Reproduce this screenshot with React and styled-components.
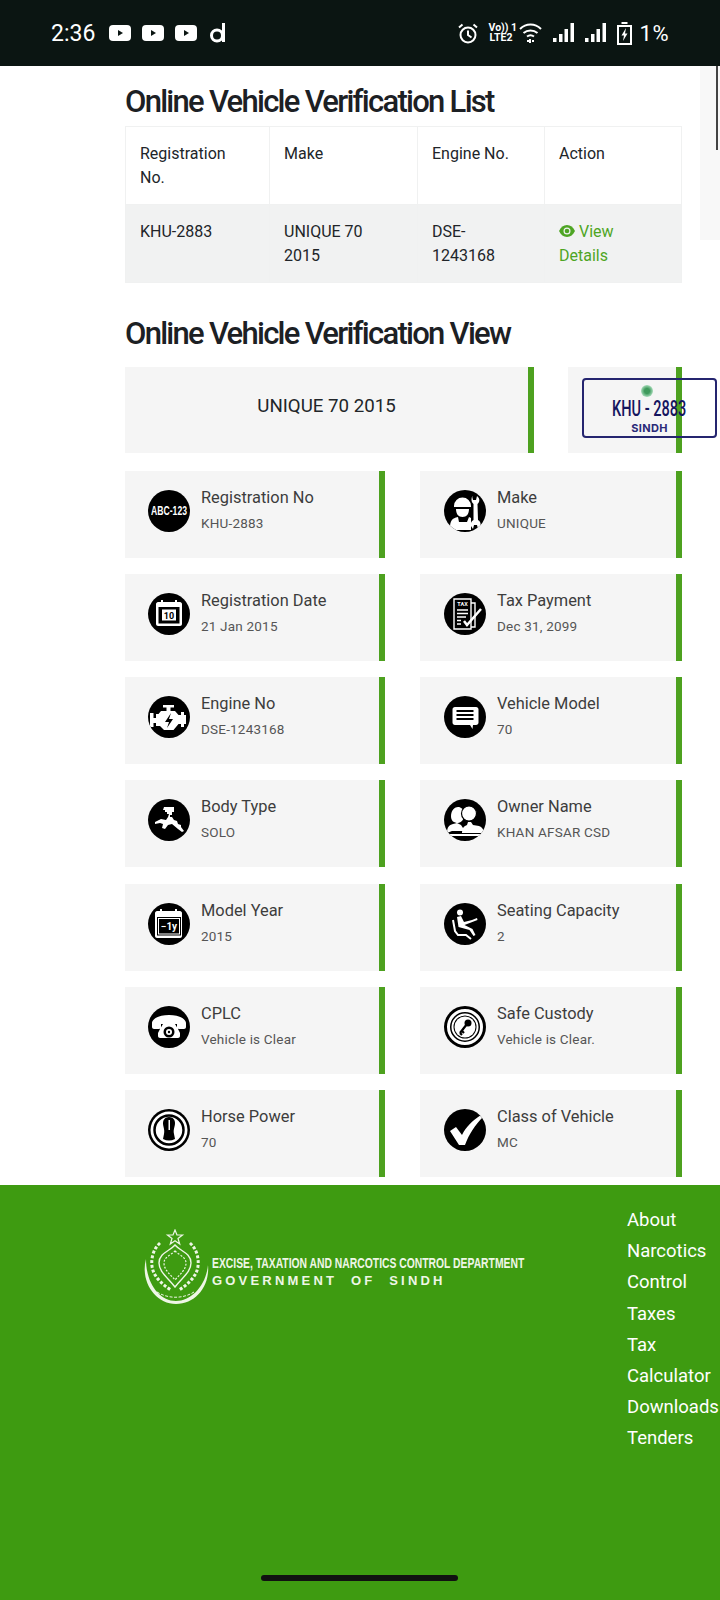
import React from 'react';
import styled, { createGlobalStyle } from 'styled-components';

const Global = createGlobalStyle`
  html, body { margin: 0; padding: 0; background: #fff; }
  body { font-family: Roboto, "Liberation Sans", sans-serif; color: #212529; }
`;

const Page = styled.div`
  position: relative;
  width: 720px;
  height: 1600px;
  overflow: hidden;
  display: flex;
  flex-direction: column;
`;

const StatusBar = styled.div`
  height: 66px;
  flex: none;
  background: #0b1512;
  color: #fff;
  display: flex;
  align-items: center;
  justify-content: space-between;
  padding: 0 51px 0 51px;
`;
const StatusGroup = styled.div`
  display: flex;
  align-items: center;
  gap: ${p => p.$gap || 10}px;
`;
const Time = styled.span`
  font-size: 23px;
  margin-right: 3px;
`;
const Percent = styled.span`
  font-size: 22px;
  margin-left: -3px;
  letter-spacing: .5px;
`;
const NetLabel = styled.span`
  font-size: 10.5px;
  line-height: 10.5px;
  font-weight: 700;
  width: 25px;
  text-align: center;
  white-space: nowrap;
`;

const SidePanel = styled.div`
  position: absolute;
  top: 66px;
  right: 0;
  width: 20px;
  height: 174px;
  background: #f8f8f8;
  &::after {
    content: '';
    position: absolute;
    top: 0;
    right: 2px;
    width: 2px;
    height: 84px;
    background: #444;
  }
`;

const Content = styled.main`
  margin-left: 125px;
  width: 557px;
  flex: none;
`;
const Heading = styled.h2`
  font-size: 31px;
  line-height: 38px;
  font-weight: 500;
  letter-spacing: -1.72px;
  color: #1c2024;
  margin: ${p => p.$top}px 0 ${p => p.$bottom}px;
`;
const Table = styled.table`
  width: 556px;
  table-layout: fixed;
  border-collapse: collapse;
  font-size: 16px;
  line-height: 24px;
  margin: 0;
`;
const Cell = styled.td`
  box-sizing: border-box;
  border: 1px solid #f0f1f1;
  padding: 15px 20px 14px 14px;
  vertical-align: top;
  font-weight: 400;
  text-align: left;
  background: ${p => (p.$striped ? '#f1f2f2' : '#fff')};
  width: ${p => p.$w}px;
`;
const HeadCell = styled(Cell).attrs({ as: 'th' })`
  font-weight: 400;
`;
const Link = styled.a`
  color: #4ea524;
`;

const TopRow = styled.div`
  display: grid;
  grid-template-columns: 409px 114px;
  column-gap: 34px;
`;
const Banner = styled.div`
  position: relative;
  height: 86px;
  background: #f5f5f5;
  border-right: 6px solid #4da11f;
  display: flex;
  align-items: center;
  justify-content: center;
  font-size: 18.7px;
  padding-bottom: 9px;
  box-sizing: border-box;
`;
const Plate = styled.div`
  position: absolute;
  left: 14px;
  top: 11px;
  width: 135px;
  height: 60px;
  box-sizing: border-box;
  border: 2px solid #25256f;
  border-radius: 4px;
  display: flex;
  flex-direction: column;
  align-items: center;
  color: #15155f;
`;
const PlateDot = styled.span`
  width: 12px;
  height: 12px;
  margin-top: 5px;
  border-radius: 50%;
  background: radial-gradient(#3f9a5c 30%, #a5dab8 70%);
  margin-right: 6px;
  flex: none;
`;
const PlateNo = styled.span`
  font-size: 22px;
  line-height: 23px;
  font-weight: 500;
  transform: scaleX(.66);
  white-space: nowrap;
`;
const PlateState = styled.span`
  font-size: 11px;
  line-height: 12px;
  font-weight: 700;
  font-family: Inter, Roboto, sans-serif;
  color: #2a2a78;
  letter-spacing: .3px;
  margin-top: 2px;
`;

const Grid = styled.div`
  display: grid;
  grid-template-columns: 260px 262px;
  column-gap: 35px;
  row-gap: 16.3px;
  margin-top: 17.5px;
`;
const Card = styled.div`
  height: 87px;
  box-sizing: border-box;
  background: #f5f5f5;
  border-right: 6px solid #4da11f;
  display: flex;
  padding: 19px 0 0 23px;
  gap: 11px;
  &:nth-child(even) { padding-left: 24px; }
`;
const Circle = styled.div`
  width: 42px;
  height: 42px;
  flex: none;
  border-radius: 50%;
  background: #000;
  color: #fff;
  display: flex;
  align-items: center;
  justify-content: center;
  overflow: hidden;
`;
const CircleText = styled.span`
  font-family: "Liberation Sans", sans-serif;
  font-weight: 700;
  font-size: 12px;
  white-space: nowrap;
  transform: scaleX(.72);
`;
const CardTitle = styled.div`
  font-size: 16.4px;
  line-height: 20px;
  color: #3d3d3d;
  margin-bottom: 6px;
  margin-top: -2px;
`;
const CardValue = styled.div`
  font-size: 13.5px;
  line-height: 18px;
  color: #555;
  letter-spacing: .2px;
`;

const Footer = styled.footer`
  margin-top: 7.5px;
  flex: 1;
  background: #3e9b11;
  display: flex;
  position: relative;
`;
const Brand = styled.div`
  margin: 44px 0 0 143px;
  display: flex;
  align-items: flex-start;
  width: 484px;
  flex: none;
  color: #eef6e6;
`;
const BrandText = styled.div`
  margin: 25px 0 0 3px;
  font-family: "Liberation Sans", sans-serif;
  font-weight: 700;
`;
const BrandLine1 = styled.div`
  font-size: 15px;
  line-height: 17px;
  white-space: nowrap;
  transform: scaleX(.69);
  transform-origin: left center;
  width: 312px;
`;
const BrandLine2 = styled.div`
  font-size: 13px;
  line-height: 19px;
  letter-spacing: 3.2px;
  word-spacing: 7px;
  white-space: nowrap;
`;
const Nav = styled.ul`
  list-style: none;
  margin: 0;
  padding: 20.5px 0 0;
  width: 93px;
  flex: none;
  color: #fff;
  font-size: 18.5px;
  line-height: 31.1px;
`;
const HomeBar = styled.div`
  position: absolute;
  left: 261px;
  bottom: 19px;
  width: 197px;
  height: 6px;
  border-radius: 3px;
  background: #111;
`;

const W = { fill: '#fff' };
const K = { fill: '#000' };
const S = { fill: 'none', stroke: '#fff', strokeWidth: 2 };

const icons = {
  make: <>
    <path {...W} d="M10 16a8.500 8.500 0 0 1 17 0v1H10z" />
    <path {...W} d="M12 19h13c0 5-2.400 8-6.500 8S12 24 12 19z" />
    <path {...W} d="M6 38c0-7 2-10 8-11l1 5h8l2-5 2 1v12H8z" />
    <path {...W} d="M28 6l1 4h3l1-4c3 2 3 6 .5 8l.5 16c2 1 3 3 2.500 6l-2.500 3-1-4h-3l-1 4-2-3c-.7-3 .5-5 2.500-6V14c-2.500-2-2.500-6-1-8z" />
  </>,
  calendar: <>
    <path {...W} d="M10 9h3V7h2v2h12V7h2v2h3c1 0 2 1 2 2v20c0 1-1 2-2 2H10c-1 0-2-1-2-2V11c0-1 1-2 2-2z" />
    <rect {...K} x="10.500" y="14" width="21" height="16.500" />
    <rect {...W} x="14" y="16.500" width="14" height="11" />
    <text x="21" y="25.500" textAnchor="middle" fontSize="9" fontWeight="700" fontFamily="Roboto" fill="#000">10</text>
  </>,
  tax: <>
    <path fill="none" stroke="#fff" strokeWidth="1.400" d="M10 6h17v30H10zM27 10h4v24h-4" />
    <text x="18.500" y="13" textAnchor="middle" fontSize="5.500" fontWeight="700" fontFamily="Roboto" fill="#fff">TAX</text>
    <path stroke="#fff" strokeWidth="1.500" d="M13 17h11M13 20.500h11M13 24h9M13 27.500h4M13 31h4" />
    <path fill="none" stroke="#fff" strokeWidth="2.500" d="M20 28l3 4 14-16" />
  </>,
  engine: <>
    <path {...W} d="M15 9h11v2.500h-3.500V15h4.500l3.500 4h2.500v-3h3v3h2v9h-2v3h-3v-3h-2.500l-5 6H16l-4-4H8v-3H5.500v4H2V17h3.500v5H8v-4h2.500l2.500-3h5.500v-3.500H15z" />
    <path {...K} d="M23 17l-6 9h4l-2 6 6-9h-4z" />
  </>,
  message: <>
    <path {...W} d="M11 11h21c1.500 0 2.500 1 2.500 2.500v13c0 1.500-1 2.500-2.500 2.500h-3l-.500 4-2.500-4H11c-1.500 0-2.500-1-2.500-2.500v-13C8.500 12 9.500 11 11 11z" />
    <path stroke="#000" strokeWidth="1.800" d="M12.500 15h17M12.500 19h17M12.500 23h17" />
  </>,
  body: <>
    <path {...W} d="M16 8h10v5h-2v3h-2v2h2l2 3 3 1 1 3 3 1v2l3 4-2 1-4-3-6-5-4 1-3 4-3-1 1-4-3-1-5 1v-2l6-3 5 1 2-3 1-3h-2v-2h-2v-2h-2z" />
  </>,
  owner: <>
    <path {...W} d="M3 34c0-6 2-8 6-9l4-1 4 2 2 3v3H8z" />
    <path {...W} d="M7 17c0-6 4-9 7-9s6 2 6 7c0 4-1 8-6 9-4 0-7-2-7-7z" />
    <circle {...W} stroke="#000" strokeWidth="1.200" cx="25" cy="14.500" r="7.500" />
    <path {...W} d="M24 23h3l2 3 6 1c3 1 5 4 5 7H18c0-3 1-6 3-7l2-1z" />
    <rect {...W} x="6" y="35" width="32" height="2" />
  </>,
  year: <>
    <path {...W} d="M9 8h3V6h2v2h13V6h2v2h3c1 0 2 1 2 2v23c0 1-1 2-2 2H9c-1 0-2-1-2-2V10c0-1 1-2 2-2z" />
    <rect {...K} x="9" y="14" width="24" height="18.500" />
    <rect {...W} x="10" y="15" width="22" height="16.500" />
    <rect {...K} x="11" y="16" width="20" height="14.500" />
    <text x="21" y="27" textAnchor="middle" fontSize="10" fontWeight="700" fontFamily="Roboto" fill="#fff">−1y</text>
  </>,
  seat: <>
    <circle {...W} cx="16" cy="9.500" r="3" />
    <path {...W} d="M13 14l4-1 3 6 8-2 5-2 .5 2-13 5 8 4 3 6-2 1-4-6-11-3z" />
    <path {...S} d="M9 17l2 11 3 4h8l5 4" />
  </>,
  phone: <>
    <path {...W} d="M4 17c0-4 7-8 17-8s17 4 17 8v4c0 1-1 2-2 2h-5c-1 0-2-1-2-2v-3h-2l3 5 2 4v3c0 1-1 2-2 2H12c-1 0-2-1-2-2v-3l2-4 3-5h-2v3c0 1-1 2-2 2H6c-1 0-2-1-2-2z" />
    <circle {...K} cx="21" cy="26" r="5.500" />
    <circle {...W} cx="21" cy="26" r="3" />
    <circle {...K} cx="21" cy="26" r="1.200" />
  </>,
  safe: <>
    <circle fill="none" stroke="#fff" strokeWidth="3" cx="21" cy="21" r="16.500" />
    <circle {...S} cx="21" cy="21" r="12.500" />
    <circle {...W} cx="21" cy="21" r="10.500" />
    <circle {...K} cx="24" cy="17" r="3.500" />
    <path stroke="#000" strokeWidth="2.200" d="M23 18l-7 9M18 25l2 2M16 27l2 2" />
  </>,
  power: <>
    <circle cx="21" cy="21" r="18.500" fill="#fff" />
    <circle cx="21" cy="21" r="14.500" fill="none" stroke="#000" strokeWidth="2.500" />
    <path {...K} d="M21 8c4 0 6 3 6 6 0 4-2 6-1 11l1 5c-4 2-8 2-12 0l1-5c1-5-1-7-1-11 0-3 2-6 6-6z" />
    <rect x="20.500" y="11" width="1.500" height="10" fill="#fff" />
  </>,
  check: <>
    <path {...W} d="M6 22l6-4 6 8C22 18 28 12 37 6l2 2c-8 8-14 17-18 28h-6z" />
  </>,
};

const rows = [
  [{ icon: 'abc', title: 'Registration No', value: 'KHU-2883' }, { icon: 'make', title: 'Make', value: 'UNIQUE' }],
  [{ icon: 'calendar', title: 'Registration Date', value: '21 Jan 2015' }, { icon: 'tax', title: 'Tax Payment', value: 'Dec 31, 2099' }],
  [{ icon: 'engine', title: 'Engine No', value: 'DSE-1243168' }, { icon: 'message', title: 'Vehicle Model', value: '70' }],
  [{ icon: 'body', title: 'Body Type', value: 'SOLO' }, { icon: 'owner', title: 'Owner Name', value: 'KHAN AFSAR CSD' }],
  [{ icon: 'year', title: 'Model Year', value: '2015' }, { icon: 'seat', title: 'Seating Capacity', value: '2' }],
  [{ icon: 'phone', title: 'CPLC', value: 'Vehicle is Clear' }, { icon: 'safe', title: 'Safe Custody', value: 'Vehicle is Clear.' }],
  [{ icon: 'power', title: 'Horse Power', value: '70' }, { icon: 'check', title: 'Class of Vehicle', value: 'MC' }],
];

const YouTube = () => (
  <svg width="22" height="16" viewBox="0 0 22 16">
    <rect width="22" height="16" rx="4" fill="#fff" />
    <path d="M9 5l5 3-5 3z" fill="#0b1512" />
  </svg>
);
const Signal = () => (
  <svg width="21" height="20" viewBox="0 0 21 20" fill="#fff">
    <rect x="0" y="15" width="3.500" height="4" />
    <rect x="6" y="11" width="3.500" height="8" />
    <rect x="11.500" y="6" width="3.500" height="13" />
    <rect x="17.500" y="0" width="3.500" height="19" />
  </svg>
);

const Emblem = () => (
  <svg width="66" height="76" viewBox="0 0 66 76" fill="none" stroke="#eef6e6">
    <path strokeWidth="1.200" d="M32 1l2 5h5.500l-4.500 3.500 1.700 5.500-4.700-3.300-4.700 3.300 1.700-5.500-4.500-3.500H30z" />
    <path fill="#eef6e6" stroke="none" d="M3 30C-3 52 12 75 33 75c19 0 34-17 32-39-2 21-17 36-32 36C16 72 3 54 3 30z" />
    <path strokeWidth="1.400" d="M32 16c5 6 16 8 16 18 0 9-9 15-16 24-7-9-16-15-16-24 0-10 11-12 16-18z" />
    <path strokeWidth="1.200" strokeDasharray="2 1.500" d="M32 22c4 4 11 6 11 12 0 7-6 11-11 17-5-6-11-10-11-17 0-6 7-8 11-12z" />
    <path strokeWidth="3" strokeDasharray="3 1.800" d="M17 14C8 22 7 36 11 44c3 6 9 12 17 17" />
    <path strokeWidth="3" strokeDasharray="3 1.800" d="M47 14c9 8 10 22 6 30-3 6-9 12-17 17" />
    <path strokeWidth="1" strokeDasharray="3 1.500" d="M14 63c11 7 26 7 37 0" />
  </svg>
);

export default function App() {
  return (
    <Page>
      <Global />
      <StatusBar>
        <StatusGroup $gap={11}>
          <Time>2:36</Time>
          <YouTube />
          <YouTube />
          <YouTube />
          <svg width="17" height="20" viewBox="0 0 17 20" fill="none" stroke="#fff" strokeWidth="3" style={{ marginLeft: 1 }}>
            <circle cx="8" cy="12.500" r="5.500" />
            <path d="M14.500 0v19" />
          </svg>
        </StatusGroup>
        <StatusGroup $gap={11}>
          <svg width="20" height="21" viewBox="0 0 20 21" fill="none" stroke="#fff" strokeWidth="2">
            <circle cx="10" cy="12" r="7.500" />
            <path d="M10 7.500V12l3.500 2.500M1 4.500L4.500 1.500M19 4.500L15.500 1.500" />
          </svg>
          <NetLabel>Vo)) 1<br />LTE2</NetLabel>
          <svg width="23" height="21" viewBox="0 0 23 21" fill="none" stroke="#fff" strokeWidth="2" style={{ marginLeft: -6 }}>
            <path d="M1 6c6-6 15-6 21 0M4.500 10c4-3.500 10-3.500 14 0M8 13.500c2-1.500 5-1.500 7 0" />
            <path d="M8 18h2M13 18h2M11 16v4" />
          </svg>
          <Signal />
          <Signal />
          <svg width="15" height="23" viewBox="0 0 15 23" fill="none" stroke="#fff" strokeWidth="2">
            <path d="M1 4h13v18H1zM4.500 1h6" />
            <path fill="#fff" stroke="none" d="M9 6l-4.500 7.500H7L6 19l4.500-7.500H8z" />
          </svg>
          <Percent>1%</Percent>
        </StatusGroup>
      </StatusBar>
      <SidePanel />

      <Content>
        <Heading $top={17} $bottom={5}>Online Vehicle Verification List</Heading>
        <Table>
          <thead>
            <tr>
              <HeadCell $w={144}>Registration No.</HeadCell>
              <HeadCell $w={148}>Make</HeadCell>
              <HeadCell $w={127}>Engine No.</HeadCell>
              <HeadCell $w={137}>Action</HeadCell>
            </tr>
          </thead>
          <tbody>
            <tr>
              <Cell $striped>KHU-2883</Cell>
              <Cell $striped>UNIQUE 70 2015</Cell>
              <Cell $striped>DSE-1243168</Cell>
              <Cell $striped>
                <Link>
                  <svg width="16" height="12" viewBox="0 0 16 12" style={{ marginRight: 4 }}>
                    <path fill="#4ea524" d="M8 0C4.500 0 1.800 2.200 0 6c1.800 3.800 4.500 6 8 6s6.200-2.200 8-6c-1.800-3.800-4.500-6-8-6z" />
                    <circle cx="8" cy="6" r="3.500" fill="#f1f2f2" />
                    <circle cx="8" cy="6" r="2.300" fill="#4ea524" />
                  </svg>
                  View Details
                </Link>
              </Cell>
            </tr>
          </tbody>
        </Table>

        <Heading $top={32} $bottom={14}>Online Vehicle Verification View</Heading>
        <TopRow>
          <Banner>UNIQUE 70 2015</Banner>
          <Banner>
            <Plate>
              <PlateDot />
              <PlateNo>KHU - 2883</PlateNo>
              <PlateState>SINDH</PlateState>
            </Plate>
          </Banner>
        </TopRow>

        <Grid>
          {rows.flat().map(item => (
            <Card key={item.title}>
              <Circle>
                {item.icon === 'abc'
                  ? <CircleText>ABC-123</CircleText>
                  : <svg width="42" height="42" viewBox="0 0 42 42">{icons[item.icon]}</svg>}
              </Circle>
              <div>
                <CardTitle>{item.title}</CardTitle>
                <CardValue>{item.value}</CardValue>
              </div>
            </Card>
          ))}
        </Grid>
      </Content>

      <Footer>
        <Brand>
          <Emblem />
          <BrandText>
            <BrandLine1>EXCISE, TAXATION AND NARCOTICS CONTROL DEPARTMENT</BrandLine1>
            <BrandLine2>GOVERNMENT OF SINDH</BrandLine2>
          </BrandText>
        </Brand>
        <Nav>
          <li>About</li>
          <li>Narcotics Control</li>
          <li>Taxes</li>
          <li>Tax Calculator</li>
          <li>Downloads</li>
          <li>Tenders</li>
        </Nav>
        <HomeBar />
      </Footer>
    </Page>
  );
}
